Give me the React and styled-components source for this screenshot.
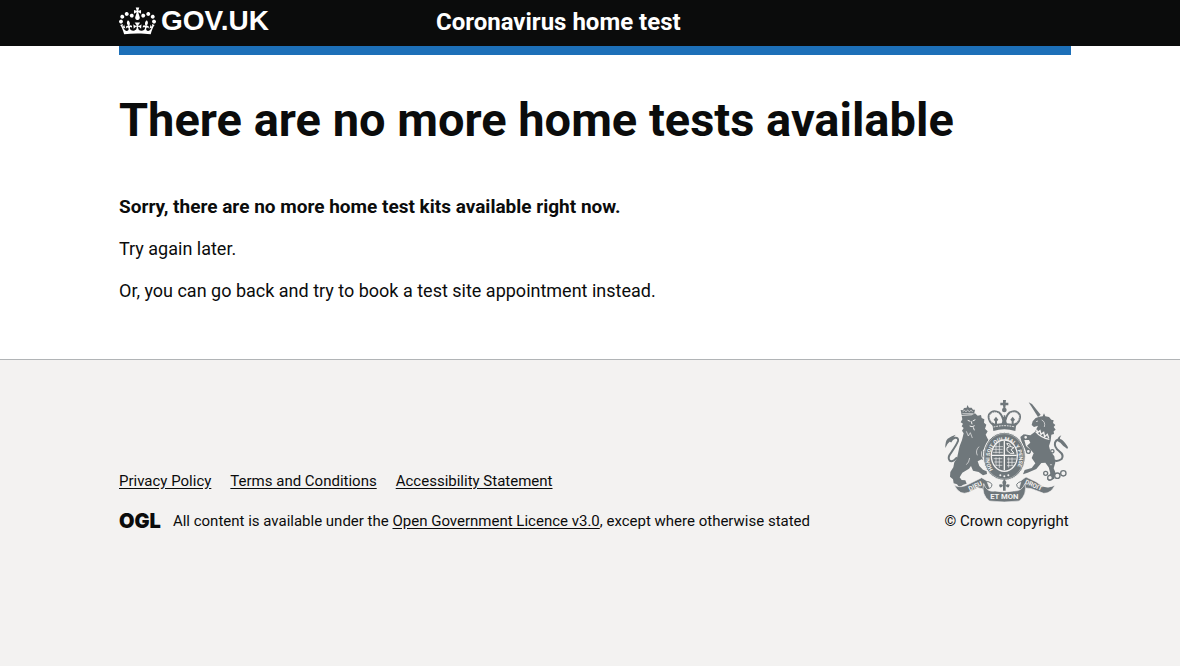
import styled, { createGlobalStyle } from "styled-components";

const GlobalStyle = createGlobalStyle`
  * {
    box-sizing: border-box;
  }

  html {
    background-color: #f3f2f1;
  }

  body {
    margin: 0;
    color: #0b0c0c;
    background-color: #ffffff;
    font-family: Roboto, "Liberation Sans", sans-serif;
  }
`;

const Container = styled.div`
  max-width: 1012px;
  margin: 0 auto;
  padding: 0 25px 0 35px;
`;

const Header = styled.header`
  background-color: #0b0c0c;
  color: #ffffff;
`;

const HeaderRow = styled.div`
  display: flex;
  align-items: center;
  height: 46px;
  padding-bottom: 3px;
`;

const LogoColumn = styled.div`
  width: 33.3%;
`;

const HomeLink = styled.a`
  display: inline-flex;
  align-items: center;
  gap: 5px;
  color: #ffffff;
  font-family: "Liberation Sans", sans-serif;
  font-size: 28px;
  font-weight: 700;
  line-height: 32px;
  text-decoration: none;
`;

const ServiceLink = styled.a`
  color: #ffffff;
  font-size: 24px;
  font-weight: 700;
  line-height: 28px;
  text-decoration: none;
`;

const BlueBar = styled.div`
  height: 9px;
  background-color: #1d70b8;
`;

const Main = styled.main`
  padding: 38px 0 40px;
`;

const Heading = styled.h1`
  margin: 0 0 46px;
  font-size: 47px;
  font-weight: 700;
  line-height: 54px;
`;

const Body = styled.p`
  margin: 0 0 15px;
  font-size: 18px;
  line-height: 27px;
`;

const BoldBody = styled(Body)`
  font-size: 19px;
  font-weight: 700;
`;

const Footer = styled.footer`
  padding: 40px 0;
  border-top: 1px solid #b1b4b6;
  background-color: #f3f2f1;
  font-size: 15px;
  line-height: 20px;
`;

const FooterRow = styled.div`
  display: flex;
  align-items: flex-end;
  justify-content: space-between;
`;

const LinkList = styled.ul`
  display: flex;
  gap: 19px;
  margin: 0 0 20px;
  padding: 0;
  list-style: none;
`;

const FooterLink = styled.a`
  color: #0b0c0c;
  text-underline-offset: 2px;
`;

const Licence = styled.div`
  display: flex;
  align-items: center;
  gap: 12px;
`;

const OglMark = styled.span`
  font-family: Inter, sans-serif;
  font-size: 20px;
  font-weight: 900;
  line-height: 20px;
`;

const CopyrightLink = styled.a`
  display: flex;
  flex-direction: column;
  align-items: center;
  gap: 9px;
  min-width: 129px;
  color: #0b0c0c;
  text-decoration: none;
`;

function Crown() {
  return (
    <svg width="37" height="28" viewBox="0 0 132 97" aria-hidden="true">
      <path
        fill="currentColor"
        fillRule="evenodd"
        d="M25 30.2c3.5 1.5 7.7-.2 9.1-3.7 1.5-3.6-.2-7.8-3.9-9.2-3.6-1.4-7.6.3-9.1 3.9-1.4 3.5.3 7.5 3.9 9zM9 39.5c3.6 1.5 7.8-.2 9.2-3.7 1.5-3.6-.2-7.8-3.9-9.1-3.6-1.5-7.6.2-9.1 3.8-1.4 3.5.3 7.5 3.8 9zM4.4 57.2c3.5 1.5 7.7-.2 9.1-3.8 1.5-3.6-.2-7.7-3.9-9.1-3.5-1.5-7.6.3-9.1 3.8-1.4 3.5.3 7.6 3.9 9.1zm38.3-21.4c3.5 1.5 7.7-.2 9.1-3.8 1.5-3.6-.2-7.7-3.9-9.1-3.6-1.5-7.6.3-9.1 3.8-1.3 3.6.4 7.7 3.9 9.1zm64.4-5.6c-3.6 1.5-7.8-.2-9.1-3.7-1.5-3.6.2-7.8 3.8-9.2 3.6-1.4 7.7.3 9.2 3.9 1.3 3.5-.4 7.5-3.9 9zm15.9 9.3c-3.6 1.5-7.7-.2-9.1-3.7-1.5-3.6.2-7.8 3.7-9.1 3.6-1.5 7.7.2 9.2 3.8 1.5 3.5-.3 7.5-3.8 9zm4.7 17.7c-3.6 1.5-7.8-.2-9.2-3.8-1.5-3.6.2-7.7 3.9-9.1 3.6-1.5 7.7.3 9.2 3.8 1.3 3.5-.4 7.6-3.9 9.1zM89.3 35.8c-3.6 1.5-7.8-.2-9.2-3.8-1.4-3.6.2-7.7 3.9-9.1 3.6-1.5 7.7.3 9.2 3.8 1.4 3.6-.3 7.7-3.9 9.1zM69.7 17.7l8.9 4.7V9.3l-8.9 2.8c-.2-.3-.5-.6-.9-.9L72.4 0H59.6l3.5 11.2c-.3.3-.6.5-.9.9l-8.8-2.8v13.1l8.8-4.7c.3.3.6.7.9.9l-5 15.4v.1c-.2.8-.4 1.6-.4 2.4 0 4.1 3.1 7.5 7 8.1h.2c.3 0 .7.1 1 .1.4 0 .7 0 1-.1h.2c4-.6 7.1-4.1 7.1-8.1 0-.8-.1-1.7-.4-2.4V34l-5.1-15.4c.4-.2.7-.6 1-.9zM66 92.8c16.9 0 32.8 1.1 47.1 3.2 4-16.9 8.9-26.7 14-33.5l-9.6-3.4c1 4.9 1.1 7.2 0 10.2-1.5-1.4-3-4.3-4.2-8.7L108.6 76c2.8-2 5-3.2 7.5-3.3-4.4 9.4-10 11.9-13.6 11.2-4.3-.8-6.3-4.6-5.6-7.9 1-4.7 5.7-5.9 8-.5 4.3-8.7-3-11.4-7.6-8.8 7.1-7.2 7.9-13.5 2.1-21.1-8 6.1-8.1 12.3-4.5 20.8-4.7-5.4-12.1-2.5-9.5 6.2 3.4-5.2 7.9-2 7.2 3.1-.6 4.3-6.4 7.8-13.5 7.2-10.3-.9-10.9-8-11.2-13.8 2.5-.5 7.1 1.8 11 7.3L80.2 60c-4.1 4.4-8 5.3-12.3 5.4 1.4-4.4 8-11.6 8-11.6H55.5s6.4 7.2 7.9 11.6c-4.2-.1-8-1-12.3-5.4l1.4 16.4c3.9-5.5 8.5-7.7 10.9-7.3-.3 5.8-.9 12.8-11.1 13.8-7.2.6-12.9-2.9-13.5-7.2-.7-5 3.8-8.3 7.1-3.1 2.7-8.7-4.6-11.6-9.4-6.2 3.7-8.5 3.6-14.7-4.6-20.8-5.8 7.6-5 13.9 2.2 21.1-4.7-2.6-11.9.1-7.7 8.8 2.3-5.5 7.1-4.2 8.1.5.7 3.3-1.3 7.1-5.7 7.9-3.5.7-9-1.8-13.5-11.2 2.5.1 4.7 1.3 7.5 3.3l-4.7-15.4c-1.2 4.4-2.7 7.2-4.3 8.7-1.1-3-.9-5.3 0-10.2l-9.5 3.4c5 6.9 9.9 16.7 14 33.5 14.8-2.1 30.8-3.2 47.7-3.2z"
      />
    </svg>
  );
}

const ink = "#6f777b";
const paper = "#f3f2f1";

function RoyalArms() {
  return (
    <svg width="125" height="102" viewBox="41 30 375 306" aria-hidden="true">
      {/* lion */}
      <g fill={ink}>
        <path d="M96 88L91 97L98 101L94 109L100 114L95 122L100 130L95 150L88 168L84 186L80 205L72 217L69 232L60 246L59 260L68 268L70 280L80 283L87 292L99 284L109 281L105 271L94 270L88 262L96 248L116 236L122 228L128 242L145 246L158 256L170 252L169 244L158 239L147 228L142 214L154 208L165 214L168 190L157 183L166 170L174 150L166 134L172 124L164 116L168 104L161 98L162 88L154 84L152 75L142 77L134 70L124 76L94 77Z" />
        <path d="M94 75L91 60L98 61L101 54L109 53L111 45L116 53L124 53L128 59L134 59L131 73Z" />
      </g>
      <path d="M97 65q5-8 10 0q5-9 10 0q5-8 10 0M96 71h34" fill="none" stroke={paper} strokeWidth="2" />
      <path d="M112 91l8 3M127 93l8-4M123 94l2 9M118 108q7 5 15-1M129 112l3 9" fill="none" stroke={paper} strokeWidth="3" />
      <path d="M108 124l6 14l6-10l6 16M146 170q-12 12-5 26M118 204q-2 14-10 20M160 210q-10-12-6-26" fill="none" stroke={paper} strokeWidth="2" />
      <path d="M80 202Q66 218 58 212Q50 203 63 187Q79 164 83 153Q85 142 74 143Q65 145 60 156" fill="none" stroke={ink} strokeWidth="6" />
      <path d="M76 134Q68 145 60 153Q50 161 45 174Q44 154 52 146Q62 138 76 134Z" fill={ink} />

      {/* unicorn */}
      <g fill={ink}>
        <path d="M295 37L305 42L331 74L323 81Z" />
        <path d="M327 80L337 79L341 70L345 79L356 81L363 89L370 91L368 99L375 105L370 111L376 119L370 124L371 132L363 134L361 152L356 168L360 184L372 199L375 218L370 235L375 247L372 266L356 273L350 267L360 250L355 232L345 218L333 219L318 237L292 248L278 253L283 240L304 234L315 220L304 204L310 190L299 177L290 167L300 158L296 150L282 150L287 168L301 180L298 192L288 187L284 177L276 165L270 141L280 133L300 136L314 125L323 107L311 111L304 105L307 94L316 84Z" />
      </g>
      <path d="M316 125Q333 145 357 148M318 119l5 8l6-5l3 11l8-6l3 13l8-7l4 11" fill="none" stroke={paper} strokeWidth="4" />
      <path d="M317 95l6-2M334 90q12 5 8 21" fill="none" stroke={paper} strokeWidth="2" />
      <path d="M371 211Q382 216 394 207Q402 195 387 184Q371 171 374 158Q379 146 392 151Q400 157 411 174" fill="none" stroke={ink} strokeWidth="6" />
      <path d="M382 154Q378 143 393 136Q383 148 397 154Q407 161 413 177Q397 169 390 158Z" fill={ink} />
      <g fill={paper} stroke={ink} strokeWidth="4">
        <circle cx="366" cy="184" r="5" />
        <circle cx="346" cy="250" r="6" />
        <circle cx="359" cy="263" r="7" />
        <circle cx="381" cy="257" r="8" />
        <circle cx="399" cy="250" r="8" />
        <circle cx="286" cy="142" r="6" />
        <circle cx="294" cy="184" r="6" />
        <circle cx="362" cy="224" r="4" />
      </g>

      {/* garter and shield */}
      <ellipse cx="222" cy="199" rx="63" ry="72" fill={ink} stroke={paper} strokeWidth="3" />
      <ellipse cx="222" cy="199" rx="59" ry="68" fill="none" stroke={paper} strokeWidth="1" />
      <path id="garter" d="M188 239A44 53 0 1 1 256 239" fill="none" />
      <text fill={paper} fontSize="16" fontWeight="700">
        <textPath href="#garter">HONI SOIT QUI MAL Y PENSE</textPath>
      </text>
      <ellipse cx="222" cy="197" rx="39" ry="47" fill={ink} stroke={paper} strokeWidth="4" />
      <path d="M185 196h74M222 152v89" stroke={paper} strokeWidth="4" />
      <path d="M191 170h27M188 178h29M188 187h29M197 161v29M207 157v34M190 206h26M192 216h24M197 226h19M197 202v26M207 202v32M230 207h27M230 217h24M230 227h19M235 202v31M245 202v25" stroke={paper} strokeWidth="2" />
      <path d="M229 161q12-3 10 8l12 4l-9 6l9 11h-11l-10-8v-9l7-2z" fill="none" stroke={paper} strokeWidth="3" />
      <circle cx="210" cy="256" r="3" fill={paper} />
      <circle cx="222" cy="259" r="3" fill={paper} />
      <circle cx="234" cy="256" r="3" fill={paper} />

      {/* crown */}
      <path d="M218 30h9l-1 8h8v8h-8l-1 8h-6l-1-8h-8v-8h8z" fill={ink} />
      <circle cx="222" cy="60" r="7" fill={ink} />
      <path d="M190 106Q171 91 176 74Q187 57 207 68Q217 76 220 98M254 106Q273 91 268 74Q257 57 237 68Q227 76 224 98" fill="none" stroke={ink} strokeWidth="6" />
      <path d="M190 103Q174 90 178 75Q187 61 205 70M254 103Q270 90 266 75Q257 61 239 70" fill="none" stroke={paper} strokeWidth="2" strokeDasharray="3 3" />
      <path d="M187 109L185 97L194 101V94L190 89L197 80L204 89L200 94V101L214 100L219 88H215V81H220V76H225V81H230V88H225L230 100L244 101V94L240 89L247 80L254 89L250 94V101L259 97L257 109L255 123Q222 113 189 123Z" fill={ink} />
      <path d="M190 111Q222 103 254 111" fill="none" stroke={paper} strokeWidth="3" strokeDasharray="5 3" />

      {/* ribbon */}
      <g fill={ink} stroke={paper} strokeWidth="2">
        <path d="M72 286Q91 296 116 282L154 263L169 272L178 295L164 310L156 296L142 293L115 307Q88 318 72 286Z" />
        <path d="M273 271L287 261L317 275L335 288Q354 296 374 286Q362 311 340 310L303 296L287 294L280 310L266 295Z" />
        <path d="M160 280Q168 308 194 303Q222 309 250 303Q276 304 284 280Q291 315 267 333Q222 339 177 333Q152 314 160 280Z" />
      </g>
      <path d="M160 280q13-12 25 3q-1 14-13 12M284 280q-13-12-25 3q1 14 13 12" fill="none" stroke={ink} strokeWidth="3" />
      <path d="M218 302V288Q208 298 206 284Q214 280 218 287L216 276L222 267L228 276L226 287Q230 280 238 284Q236 298 226 288V302Z" fill={ink} />
      <g fill={paper} fontWeight="700" textAnchor="middle">
        <text x="135" y="295" fontSize="20" transform="rotate(-25 135 288)">DIEU</text>
        <text x="222" y="328" fontSize="23">ET MON</text>
        <text x="310" y="292" fontSize="19" transform="rotate(24 310 285)">DROIT</text>
      </g>
    </svg>
  );
}

const footerLinks = ["Privacy Policy", "Terms and Conditions", "Accessibility Statement"];

export default function App() {
  return (
    <>
      <GlobalStyle />
      <Header>
        <Container>
          <HeaderRow>
            <LogoColumn>
              <HomeLink href="#">
                <Crown />
                GOV.UK
              </HomeLink>
            </LogoColumn>
            <ServiceLink href="#">Coronavirus home test</ServiceLink>
          </HeaderRow>
        </Container>
      </Header>
      <Container>
        <BlueBar />
        <Main>
          <Heading>There are no more home tests available</Heading>
          <BoldBody>Sorry, there are no more home test kits available right now.</BoldBody>
          <Body>Try again later.</Body>
          <Body>Or, you can go back and try to book a test site appointment instead.</Body>
        </Main>
      </Container>
      <Footer>
        <Container>
          <FooterRow>
            <div>
              <LinkList>
                {footerLinks.map((label) => (
                  <li key={label}>
                    <FooterLink href="#">{label}</FooterLink>
                  </li>
                ))}
              </LinkList>
              <Licence>
                <OglMark>OGL</OglMark>
                <span>
                  All content is available under the{" "}
                  <FooterLink href="#">Open Government Licence v3.0</FooterLink>, except where
                  otherwise stated
                </span>
              </Licence>
            </div>
            <CopyrightLink href="#">
              <RoyalArms />
              <span>© Crown copyright</span>
            </CopyrightLink>
          </FooterRow>
        </Container>
      </Footer>
    </>
  );
}
